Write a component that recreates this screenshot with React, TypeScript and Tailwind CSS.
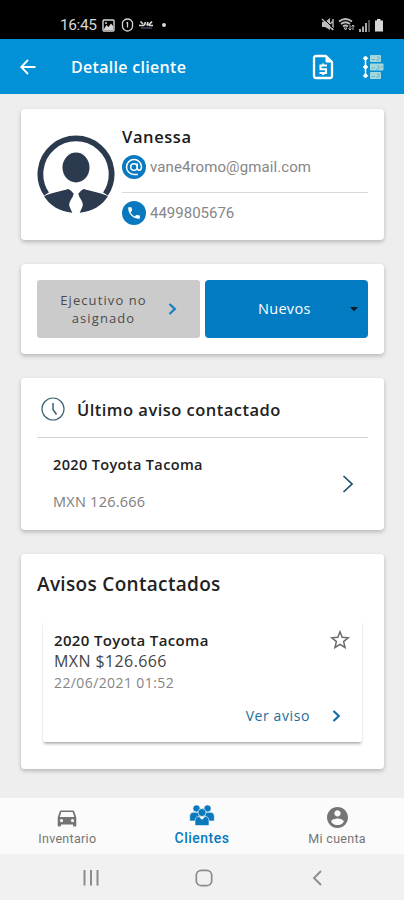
import type { ReactNode } from "react";

const OPEN = "font-['Open_Sans','Noto_Sans',sans-serif]";
const ROBOTO = "font-[Roboto,sans-serif]";

function Card({ className, children }: { className: string; children: ReactNode }) {
  return (
    <section className={`rounded-[4px] bg-white px-4 shadow-[0_2px_4px_rgba(0,0,0,0.24)] ${className}`}>
      {children}
    </section>
  );
}

function Chevron({ className, d, width, box }: { className: string; d: string; width: number; box: string }) {
  return (
    <svg className={className} viewBox={box} fill="none" stroke="currentColor" strokeWidth={width}>
      <path d={d} />
    </svg>
  );
}

function StatusBar() {
  return (
    <div className="flex h-[39px] items-end bg-black pr-[20px] pb-[6px] pl-[60px] text-[#d6d6d6]">
      <span className={`${ROBOTO} w-[42px] text-[15.5px] leading-[15px] tracking-[-0.4px]`}>16:45</span>
      <svg className="mb-[1px] h-[13px] w-[13px]" viewBox="0 0 13 13">
        <rect x="1" y="1" width="11" height="11" rx="1" fill="none" stroke="currentColor" strokeWidth="1.4" />
        <path d="M2 10 4.5 6 6.5 8 9 4.5 11 7V11H2Z" fill="currentColor" />
        <circle cx="4" cy="4" r="1" fill="currentColor" />
      </svg>
      <svg className="mb-[1px] ml-[6px] h-[14px] w-[13px]" viewBox="0 0 13 14" fill="none" stroke="currentColor" strokeWidth="1.3">
        <path d="M6.5 1C9 1 11.5 3 11.5 4.5V8.5C11.5 11 8.5 13 6.5 13S1.5 11 1.5 8.5V4.5C1.5 3 4 1 6.5 1Z" />
        <path d="M6.5 4V9.5M5.5 5H6.5" />
      </svg>
      <svg className="mb-[3px] ml-[5px] h-[10px] w-[15px]" viewBox="0 0 15 10" fill="none" stroke="currentColor" strokeWidth="1.7">
        <path d="M0 5.5H4.500Q6 5 6.500 2M1.500 1.500 4 4M8 5.500Q10.500 5 13 1.500M9 2 8 5.500M10 5.500H14" />
        <path d="M2 8H13" strokeWidth="1" stroke="#5d6b86" />
      </svg>
      <span className="mb-[6px] ml-[8px] h-[4px] w-[4px] rounded-full bg-current" />
      <div className="flex-1" />
      <svg className="mb-[1px] h-[15px] w-[14px]" viewBox="0 0 14 15">
        <path d="M1 5H4L9 1V13L4 10H1Z" fill="#bdbdbd" />
        <path d="M1 2 12 13M12 2V13M9 7 12 4" stroke="#bdbdbd" strokeWidth="1.4" fill="none" />
        <path d="M2 1 13 12" stroke="#000" strokeWidth="1" />
      </svg>
      <svg className="mb-[1px] ml-[3px] h-[15px] w-[17px]" viewBox="0 0 17 15" fill="none" stroke="#bdbdbd" strokeWidth="1.8">
        <path d="M1 4.5Q7.5 -.5 14 4.5M3 7Q7.5 3.5 12 7M5 9.5Q7.5 7.5 10 9.5" />
        <path d="M6 11H9L7.5 13ZM12 8V13M10.5 11.5 12 13 13.5 11.5M15 13V8M13.5 9.5 15 8 16.5 9.5" strokeWidth="1" />
      </svg>
      <svg className="mb-[1px] ml-[3px] h-[14px] w-[12px]" viewBox="0 0 12 14">
        <path d="M1 11H3V14H1ZM4 8.5H6V14H4ZM7 5H9V14H7Z" fill="#aaa" />
        <path d="M10 2H12V14H10Z" fill="#555" />
      </svg>
      <svg className="mb-[1px] ml-[4px] h-[14px] w-[10px]" viewBox="0 0 10 14">
        <path d="M1 2.5H3V1H6.500V2.500H9V13.500H1Z" fill="currentColor" />
      </svg>
    </div>
  );
}

function Header() {
  return (
    <header className="flex h-[55px] items-center bg-[#0290d6] pr-[20px] pl-[20px] text-white">
      <svg className="h-[16px] w-[16px]" viewBox="0 0 16 16" fill="none" stroke="currentColor" strokeWidth="1.8">
        <path d="M15.5 8H1.5M8 1 1.2 8 8 15" />
      </svg>
      <h1 className={`${OPEN} ml-[35px] text-[16px] leading-[22px] font-semibold tracking-[0.3px] whitespace-nowrap`}>
        Detalle cliente
      </h1>
      <div className="flex-1" />
      <svg className="h-[26px] w-[22px]" viewBox="0 0 22 26" fill="none" stroke="currentColor">
        <path d="M4 2H14L20 8V22Q20 24 18 24H4Q2 24 2 22V4Q2 2 4 2Z" strokeWidth="2.3" strokeLinejoin="round" />
        <path d="M14 2V8H20Z" fill="currentColor" strokeWidth="1" />
        <path d="M15 11.5H8.5V15.2H14V19H7.5M11.2 9.500V11.5M11.2 19V21" strokeWidth="2.1" />
      </svg>
      <svg className="ml-[28px] h-[26px] w-[22px]" viewBox="0 0 22 26">
        <path d="M3.5 4V22" stroke="#fff" strokeWidth="1.5" />
        <path d="M3.5 2 5.700 4.300 3.500 6.600 1.300 4.300ZM3.500 10.700 5.700 13 3.500 15.300 1.300 13ZM3.500 19.400 5.700 21.700 3.500 24 1.300 21.700Z" fill="#fff" stroke="#fff" strokeLinejoin="round" />
        <rect x="8" y="1" width="11" height="7" rx="1" fill="#a3d9dc" />
        <rect x="8" y="9.5" width="13.5" height="7" rx="1" fill="#a3d9dc" />
        <rect x="8" y="18" width="11" height="7" rx="1" fill="#a3d9dc" />
        <path d="M9.5 5.5H13M15 3H17V6H14M9.5 14H13M15 12H17V15H14M19 13H21M9.5 22.5H13M15 20H17V23H14" fill="none" stroke="#6fb3c2" />
      </svg>
    </header>
  );
}

function Avatar() {
  return (
    <svg className="mt-[26px] h-[78px] w-[78px] shrink-0" viewBox="0 0 78 78">
      <path d="M9.5 59A35.6 35.6 0 1 1 68.5 59" fill="none" stroke="#2c3a4f" strokeWidth="5.8" />
      <ellipse cx="39" cy="32.5" rx="13.5" ry="15" fill="#2c3a4f" />
      <path d="M7 61 14 58.500 31.500 54Q34.500 55.500 36.700 58.800Q36 62 34 64.500Q31.500 69 32.500 71.500L35.300 77.800C23 76.500 13 71 7 61Z" fill="#2c3a4f" />
      <path d="M71 61 64 58.500 46.500 54Q43.500 55.500 41.300 58.800Q42 62 44 64.500Q46.500 69 45.500 71.500L42.700 77.800C55 76.500 65 71 71 61Z" fill="#2c3a4f" />
    </svg>
  );
}

function ContactCard() {
  return (
    <Card className="flex h-[131px]">
      <Avatar />
      <div className="ml-[7px] flex-1 pt-[16px]">
        <h2 className={`${OPEN} text-[16.5px] leading-[24px] font-semibold tracking-[0.6px] text-[#1b1b1b]`}>Vanessa</h2>
        <div className="mt-[5px] flex h-[25px] items-center">
          <svg className="h-[24px] w-[24px]" viewBox="0 0 24 24" fill="none" stroke="#fff" strokeWidth="1.5">
            <circle cx="12" cy="12" r="12" fill="#0879bf" stroke="none" />
            <circle cx="12" cy="12" r="3.3" />
            <path d="M15.3 8.5V13Q15.4 15.3 17.2 15.3Q19.5 15 19.5 12A7.5 7.5 0 1 0 12 19.5H16" />
          </svg>
          <span className={`${ROBOTO} ml-[4px] text-[15px] leading-[20px] tracking-[0.1px] text-[#868686]`}>
            vane4romo@gmail.com
          </span>
        </div>
        <div className="mt-[13px] h-px bg-[#d8d8d8]" />
        <div className="mt-[7px] flex h-[25px] items-center">
          <svg className="h-[24px] w-[24px]" viewBox="0 0 24 24">
            <circle cx="12" cy="12" r="12" fill="#0879bf" />
            <path
              transform="translate(4.2 4.2) scale(.65)"
              d="M6.62 10.79c1.44 2.83 3.76 5.14 6.59 6.59l2.2-2.2c.27-.27.67-.36 1.02-.24 1.12.37 2.33.57 3.57.57.55 0 1 .45 1 1V20c0 .55-.45 1-1 1-9.39 0-17-7.61-17-17 0-.55.45-1 1-1h3.5c.55 0 1 .45 1 1 0 1.25.2 2.45.57 3.57.11.35.03.74-.25 1.02l-2.2 2.2z"
              fill="#fff"
            />
          </svg>
          <span className={`${ROBOTO} ml-[4px] text-[15px] leading-[20px] text-[#868686]`}>4499805676</span>
        </div>
      </div>
    </Card>
  );
}

function StatusCard() {
  return (
    <Card className="mt-[24px] flex h-[90px] justify-between py-[16px]">
      <button className="flex w-[163px] items-center rounded-[3px] bg-[#cbcbcb] pl-[17px]">
        <span className={`${OPEN} w-[99px] text-center text-[13px] leading-[18px] tracking-[1.1px] text-[#4b4b4b]`}>
          Ejecutivo no asignado
        </span>
        <Chevron className="ml-[15px] h-[12px] w-[9px] text-[#1581c0]" box="0 0 9 12" d="M1.5 1 6.8 6 1.5 11" width={2.3} />
      </button>
      <button className="flex w-[163px] items-center rounded-[4px] bg-[#037bc3] pl-[53px]">
        <span className={`${OPEN} w-[91px] text-left text-[14.5px] leading-[20px] tracking-[0.3px] text-white`}>Nuevos</span>
        <svg className="h-[5px] w-[10px]" viewBox="0 0 10 5">
          <path d="M1 0H9L5 4.500Z" fill="#0a1d2b" />
        </svg>
      </button>
    </Card>
  );
}

function LastAdCard() {
  return (
    <Card className="mt-[24px] h-[152px]">
      <div className="flex h-[60px] items-center border-b border-[#d4d4d4] pt-[4px] pl-[4px]">
        <svg className="mb-[1px] h-[24px] w-[24px]" viewBox="0 0 24 24" fill="none" stroke="#3d6274">
          <circle cx="12" cy="12" r="11" strokeWidth="1.2" />
          <path d="M12 6V12.5L15.500 17.500" strokeWidth="1.5" />
        </svg>
        <h2 className={`${OPEN} ml-[12px] text-[16.5px] leading-[24px] font-semibold tracking-[0.47px] whitespace-nowrap text-[#222]`}>
          Último aviso contactado
        </h2>
      </div>
      <div className="flex items-center justify-between pt-[16px] pr-[14px] pl-[16px]">
        <div>
          <h3 className={`${OPEN} text-[14.5px] leading-[22px] font-semibold tracking-[0.36px] text-[#222]`}>2020 Toyota Tacoma</h3>
          <p className={`${OPEN} mt-[15px] text-[14.5px] leading-[22px] tracking-[0.25px] text-[#7d7d7d]`}>MXN 126.666</p>
        </div>
        <Chevron className="h-[18px] w-[12px] text-[#1d4f6e]" box="0 0 12 18" d="M1.5 1 10 9 1.5 17" width={1.7} />
      </div>
    </Card>
  );
}

function AdsCard() {
  return (
    <Card className="mt-[24px] h-[215px] pt-[17px]">
      <h2 className={`${OPEN} text-[19px] leading-[26px] font-semibold tracking-[0.32px] text-[#222]`}>Avisos Contactados</h2>
      <article className="mx-[6px] mt-[23px] h-[122px] rounded-[2px] bg-white pt-[9px] pr-[12px] pl-[11px] shadow-[0_3px_3px_-1px_rgba(0,0,0,0.27),1px_1px_1px_rgba(0,0,0,0.04),-1px_1px_1px_rgba(0,0,0,0.04)]">
        <div className="flex justify-between">
          <h3 className={`${OPEN} text-[15px] leading-[22px] font-semibold tracking-[0.36px] text-[#222]`}>2020 Toyota Tacoma</h3>
          <svg className="mt-[1px] h-[20px] w-[20px]" viewBox="0 0 20 20" fill="none" stroke="#6b6b6b" strokeWidth="1.5">
            <path d="M10 1.8 12.2 7.3 18.2 7.8 13.6 11.6 15.1 17.5 10 14.3 4.9 17.5 6.4 11.6 1.8 7.8 7.8 7.3Z" />
          </svg>
        </div>
        <p className={`${OPEN} text-[16px] leading-[21px] tracking-[0.4px] text-[#444]`}>MXN $126.666</p>
        <p className={`${OPEN} text-[14px] leading-[22px] tracking-[0.4px] text-[#858585]`}>22/06/2021 01:52</p>
        <div className="mt-[11px] flex items-center justify-end pr-[9px] text-[#1c6d9c]">
          <span className={`${OPEN} text-[14px] leading-[22px] tracking-[0.6px]`}>Ver aviso</span>
          <Chevron className="ml-[22px] h-[12px] w-[9px] text-[#0e6ba3]" box="0 0 9 12" d="M1.5 1 6.8 6 1.5 11" width={2.1} />
        </div>
      </article>
    </Card>
  );
}

function TabBar() {
  return (
    <nav className={`${ROBOTO} grid h-[56px] grid-cols-3 bg-[#fbfbfb] text-[#757575]`}>
      <div className="flex flex-col items-center pt-[12px]">
        <svg className="h-[17px] w-[20px]" viewBox="0 0 20 17" fill="currentColor">
          <path
            fillRule="evenodd"
            d="M4 .5H16Q17 .5 17.3 1.5L19.3 7.5V15.5Q19.3 16.5 18.3 16.5H17Q16 16.5 16 15.5V14.5H4V15.5Q4 16.5 3 16.5H1.7Q.7 16.5.7 15.5V7.5L2.7 1.5Q3 .5 4 .5ZM4.3 2 2.8 7H17.2L15.7 2ZM4.5 9A1.6 1.6 0 1 0 4.5 12.2A1.6 1.6 0 1 0 4.5 9ZM15.5 9A1.6 1.6 0 1 0 15.5 12.2A1.6 1.6 0 1 0 15.5 9Z"
          />
        </svg>
        <span className="mt-[4px] text-[12.5px] leading-[16px] tracking-[0.3px]">Inventario</span>
      </div>
      <div className="flex flex-col items-center pt-[6px] text-[#0879bd]">
        <svg className="h-[22px] w-[26px]" viewBox="0 0 26 22" fill="currentColor" stroke="#fbfbfb" strokeWidth=".6">
          <circle cx="7.500" cy="4.5" r="3.6" />
          <circle cx="18.500" cy="4.5" r="3.6" />
          <path d="M.7 17V12Q.7 8.300 4.5 8.300H9L12 17ZM25.3 17V12Q25.3 8.300 21.5 8.300H17L14 17Z" />
          <circle cx="13" cy="8.500" r="4" />
          <path d="M6 21.5V17Q6 12.5 10 12.5L13 15.5 16 12.5Q20 12.5 20 17V21.5Z" />
        </svg>
        <span className="mt-[4px] text-[14px] leading-[16px] font-medium tracking-[0.5px]">Clientes</span>
      </div>
      <div className="flex flex-col items-center pt-[9px] pl-[1px]">
        <svg className="h-[21px] w-[21px]" viewBox="2 2 20 20" fill="currentColor">
          <path d="M12 2C6.48 2 2 6.48 2 12s4.48 10 10 10 10-4.48 10-10S17.52 2 12 2zm0 3c1.66 0 3 1.34 3 3s-1.34 3-3 3-3-1.34-3-3 1.34-3 3-3zm0 14.2c-2.5 0-4.71-1.28-6-3.22.03-1.99 4-3.08 6-3.08 1.99 0 5.97 1.09 6 3.08-1.29 1.94-3.5 3.22-6 3.22z" />
        </svg>
        <span className="mt-[3px] text-[12.5px] leading-[16px] tracking-[0.3px]">Mi cuenta</span>
      </div>
    </nav>
  );
}

function SystemBar() {
  return (
    <div className="flex h-[46px] items-center bg-[#f1f1f1] pt-[1px] text-[#8b8b8b]">
      <svg className="ml-[83px] h-[16px] w-[16px]" viewBox="0 0 16 16" stroke="currentColor" strokeWidth="2">
        <path d="M1.5 0V15.5M8 0V15.5M14.5 0V15.5" />
      </svg>
      <svg className="ml-[96px] h-[18px] w-[18px]" viewBox="0 0 18 18" fill="none" stroke="currentColor" strokeWidth="1.7">
        <rect x="1.3" y="1.3" width="15.4" height="15.4" rx="5" />
      </svg>
      <Chevron className="ml-[99px] h-[16px] w-[10px]" box="0 0 10 16" d="M9 1 2 8 9 15" width={1.8} />
    </div>
  );
}

export default function App() {
  return (
    <div className="flex h-[900px] w-[404px] flex-col overflow-hidden bg-[#eee]">
      <StatusBar />
      <Header />
      <main className="h-[704px] pt-[15px] pr-[20px] pl-[21px]">
        <ContactCard />
        <StatusCard />
        <LastAdCard />
        <AdsCard />
      </main>
      <TabBar />
      <SystemBar />
    </div>
  );
}
